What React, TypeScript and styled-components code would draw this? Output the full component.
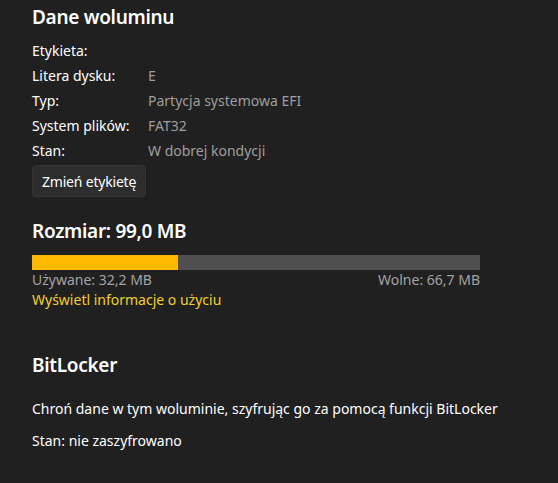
import React from "react";
import styled, { createGlobalStyle } from "styled-components";

const Global = createGlobalStyle`
  html, body { margin: 0; padding: 0; background: #202020; }
  body { font-family: "Noto Sans", "Open Sans", sans-serif; color: #ffffff; }
  * { box-sizing: border-box; }
`;

const Page = styled.main`
  width: 558px;
  height: 483px;
  padding: 3px 0 0 32px;
  background: #202020;
  display: flex;
  flex-direction: column;
  align-items: flex-start;
`;

const Heading = styled.h2<{ $top?: number }>`
  margin: ${(p) => p.$top ?? 0}px 0 0;
  font-size: 19px;
  line-height: 28px;
  font-weight: 600;
  letter-spacing: -0.3px;
  color: #ffffff;
`;

const InfoGrid = styled.dl`
  margin: 7px 0 0;
  display: grid;
  grid-template-columns: 116px auto;
  grid-auto-rows: 25px;
  font-size: 14px;
  line-height: 25px;
`;

const Label = styled.dt`
  margin: 0;
  color: #ffffff;
`;

const Value = styled.dd`
  margin: 0;
  color: #9e9e9e;
`;

const Button = styled.button`
  margin-top: 2px;
  height: 32px;
  padding: 0 9px;
  background: #2d2d2d;
  border: 1px solid #353535;
  border-radius: 4px;
  color: #ffffff;
  font-family: inherit;
  font-size: 14px;
  letter-spacing: -0.2px;
`;

const Usage = styled.section`
  margin-top: 10px;
  width: 448px;
  display: flex;
  flex-direction: column;
`;

const Bar = styled.div`
  height: 15px;
  background: #4f4f4f;
  display: flex;
`;

const BarFill = styled.div`
  background: #ffb900;
`;

const UsageLegend = styled.div`
  margin-top: 1px;
  display: flex;
  justify-content: space-between;
  font-size: 14px;
  line-height: 18px;
  color: #a3a3a3;
`;

const Link = styled.a`
  margin-top: 1px;
  font-size: 14px;
  line-height: 20px;
  color: #f0cf2a;
  text-decoration: none;
  cursor: pointer;
`;

const Paragraph = styled.p<{ $top: number }>`
  margin: ${(p) => p.$top}px 0 0;
  font-size: 14px;
  line-height: 20px;
  color: #ffffff;
`;

const rows: [string, string][] = [
  ["Etykieta:", ""],
  ["Litera dysku:", "E"],
  ["Typ:", "Partycja systemowa EFI"],
  ["System plików:", "FAT32"],
  ["Stan:", "W dobrej kondycji"],
];

const total = 99.0;
const used = 32.2;

export default function App() {
  return (
    <>
      <Global />
      <Page>
        <Heading>Dane woluminu</Heading>
        <InfoGrid>
          {rows.map(([k, v]) => (
            <React.Fragment key={k}>
              <Label>{k}</Label>
              <Value>{v}</Value>
            </React.Fragment>
          ))}
        </InfoGrid>
        <Button>Zmień etykietę</Button>
        <Heading $top={20}>Rozmiar: 99,0 MB</Heading>
        <Usage>
          <Bar>
            <BarFill style={{ width: `${(used / total) * 100}%` }} />
          </Bar>
          <UsageLegend>
            <span>Używane: 32,2 MB</span>
            <span>Wolne: 66,7 MB</span>
          </UsageLegend>
        </Usage>
        <Link>Wyświetl informacje o użyciu</Link>
        <Heading $top={41}>BitLocker</Heading>
        <Paragraph $top={20}>
          Chroń dane w tym woluminie, szyfrując go za pomocą funkcji BitLocker
        </Paragraph>
        <Paragraph $top={12}>Stan: nie zaszyfrowano</Paragraph>
      </Page>
    </>
  );
}
